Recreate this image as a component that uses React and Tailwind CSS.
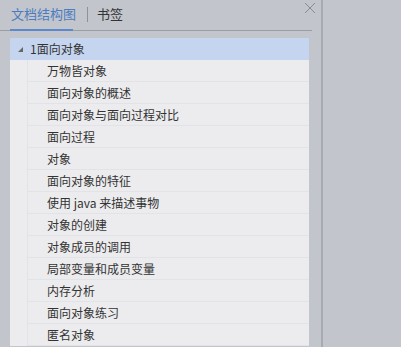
const items = [
  '万物皆对象',
  '面向对象的概述',
  '面向对象与面向过程对比',
  '面向过程',
  '对象',
  '面向对象的特征',
  '使用 java 来描述事物',
  '对象的创建',
  '对象成员的调用',
  '局部变量和成员变量',
  '内存分析',
  '面向对象练习',
  '匿名对象',
];

const font = { fontFamily: '"Noto Sans CJK SC", "Microsoft YaHei", sans-serif' };

export default function App() {
  return (
    <div className="w-[401px] h-[347px] overflow-hidden bg-[#c3c5cc] flex text-[12px]" style={font}>
      {/* outline panel */}
      <div className="relative w-[321px] h-full">
        {/* tabs */}
        <div className="flex items-start h-[31px] pl-[10px] border-b border-[#9c9ea6] w-[312px]">
          <div className="h-full flex flex-col">
            <span className="px-[1px] pt-[5px] text-[13px] leading-[18px] text-[#4b7cc0]">文档结构图</span>
            <div className="mt-auto h-[2px] w-[63px] bg-[#5b89cc] translate-y-[1px]" />
          </div>
          <div className="w-px h-[15px] bg-[#8f9198] mt-[7px] ml-[10px]" />
          <span className="ml-[9px] pt-[5px] text-[13px] leading-[18px] text-[#333]">书签</span>
        </div>

        {/* close */}
        <svg className="absolute left-[304px] top-[2px]" width="12" height="12" viewBox="0 0 12 12">
          <path d="M1 1L11 11M11 1L1 11" stroke="#8a8c94" strokeWidth="1" />
        </svg>

        {/* tree */}
        <div className="mt-[7px] ml-[10px] w-[299px] bg-[#ececee] text-[#333]">
          <div className="h-[22px] flex items-center bg-[#c6d5ef]">
            <svg className="ml-[8px]" width="5" height="5" viewBox="0 0 5 5">
              <path d="M5 0L5 5L0 5Z" fill="#666" />
            </svg>
            <span className="ml-[7px] leading-none">1面向对象</span>
          </div>
          {items.map((t) => (
            <div key={t} className="h-[22px] pl-[17px] flex">
              <div className="flex-1 flex items-center pl-[19px] border-l border-b border-[#e2e3e6]">
                <span className="leading-none">{t}</span>
              </div>
            </div>
          ))}
        </div>
      </div>

      {/* splitter */}
      <div className="w-[2px] h-full bg-[#a8aab3]" />
      <div className="flex-1 h-full bg-[#c3c5cc]" />
    </div>
  );
}
